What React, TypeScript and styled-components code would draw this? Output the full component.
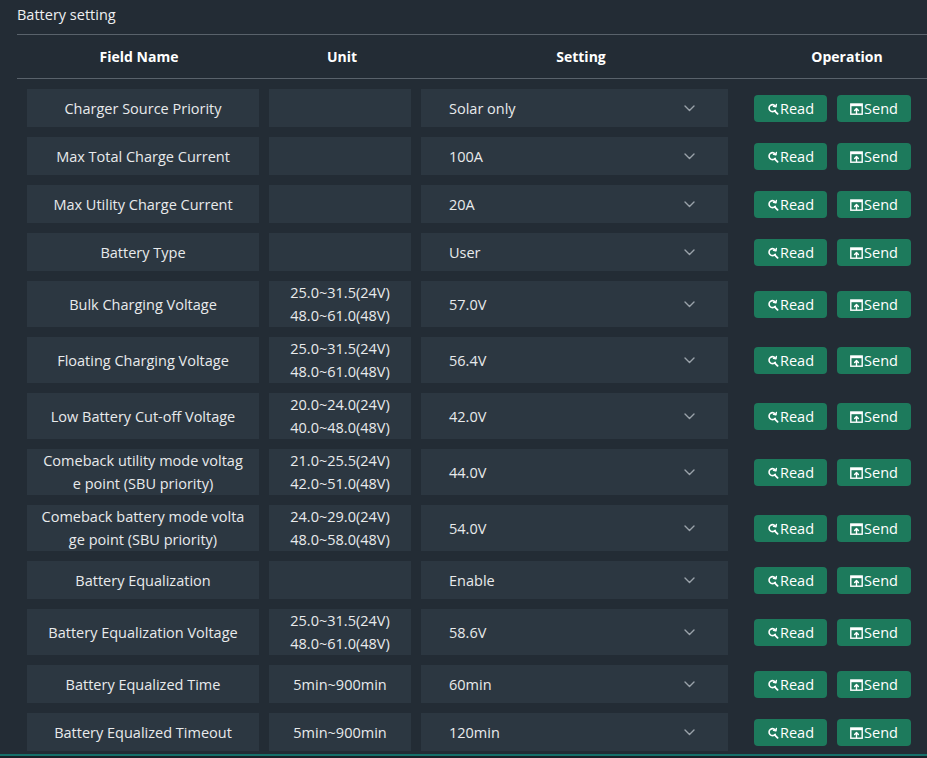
import React from "react";
import styled, { createGlobalStyle } from "styled-components";

const GlobalStyle = createGlobalStyle`
  html, body {
    margin: 0;
    padding: 0;
    background: #1a2128;
  }
  body {
    font-family: "Open Sans", "Liberation Sans", sans-serif;
    color: #e8eaec;
  }
`;

interface Row {
  name: string;
  unit?: string[];
  value: string;
}

const rows: Row[] = [
  { name: "Charger Source Priority", value: "Solar only" },
  { name: "Max Total Charge Current", value: "100A" },
  { name: "Max Utility Charge Current", value: "20A" },
  { name: "Battery Type", value: "User" },
  { name: "Bulk Charging Voltage", unit: ["25.0~31.5(24V)", "48.0~61.0(48V)"], value: "57.0V" },
  { name: "Floating Charging Voltage", unit: ["25.0~31.5(24V)", "48.0~61.0(48V)"], value: "56.4V" },
  { name: "Low Battery Cut-off Voltage", unit: ["20.0~24.0(24V)", "40.0~48.0(48V)"], value: "42.0V" },
  { name: "Comeback utility mode voltage point (SBU priority)", unit: ["21.0~25.5(24V)", "42.0~51.0(48V)"], value: "44.0V" },
  { name: "Comeback battery mode voltage point (SBU priority)", unit: ["24.0~29.0(24V)", "48.0~58.0(48V)"], value: "54.0V" },
  { name: "Battery Equalization", value: "Enable" },
  { name: "Battery Equalization Voltage", unit: ["25.0~31.5(24V)", "48.0~61.0(48V)"], value: "58.6V" },
  { name: "Battery Equalized Time", unit: ["5min~900min"], value: "60min" },
  { name: "Battery Equalized Timeout", unit: ["5min~900min"], value: "120min" },
];

// magnifier with a refresh arrow
const ReadIcon = () => (
  <svg width="12" height="12" viewBox="0 0 12 12" fill="none">
    <path d="M8.6 3.4A3.5 3.5 0 1 0 8.2 7.4" stroke="#fff" strokeWidth="1.6" strokeLinecap="round" />
    <path d="M9.4 1.4 8.9 3.9 6.5 3.3" stroke="#fff" strokeWidth="1.4" strokeLinecap="round" strokeLinejoin="round" />
    <path d="M7.6 7.8 10.6 10.8" stroke="#fff" strokeWidth="1.8" strokeLinecap="round" />
  </svg>
);

const SendIcon = () => (
  <svg width="13" height="12" viewBox="0 0 13 12" fill="none">
    <rect x="0.8" y="1" width="11.4" height="10.2" stroke="#fff" strokeWidth="1.4" />
    <rect x="0.8" y="1" width="11.4" height="2.2" fill="#fff" />
    <path d="M6.5 10.6V5.6M4.6 7.4 6.5 5.5 8.4 7.4" stroke="#fff" strokeWidth="1.4" strokeLinecap="round" strokeLinejoin="round" />
  </svg>
);

const Chevron = () => (
  <svg width="11" height="7" viewBox="0 0 11 7" fill="none">
    <path d="M1 1 5.5 5.5 10 1" stroke="#9aa2aa" strokeWidth="1.4" strokeLinecap="round" strokeLinejoin="round" />
  </svg>
);

const App: React.FC = () => {
  return (
    <Page>
      <GlobalStyle />
      <Title>Battery setting</Title>
      <Table>
        <HeaderRow>
          <HeadCell>Field Name</HeadCell>
          <HeadCell>Unit</HeadCell>
          <HeadCell>Setting</HeadCell>
          <HeadCell>Operation</HeadCell>
        </HeaderRow>
        <Body>
          {rows.map((r) => (
            <DataRow key={r.name}>
              <NameCell>{r.name}</NameCell>
              <UnitCell>
                {r.unit?.map((u) => (
                  <div key={u}>{u}</div>
                ))}
              </UnitCell>
              <SelectCell>
                <span>{r.value}</span>
                <Chevron />
              </SelectCell>
              <Ops>
                <ActionButton $w={73}>
                  <ReadIcon />
                  Read
                </ActionButton>
                <ActionButton $w={74}>
                  <SendIcon />
                  Send
                </ActionButton>
              </Ops>
            </DataRow>
          ))}
        </Body>
      </Table>
    </Page>
  );
};

const Page = styled.div`
  height: 754px;
  background: #232c35;
  border-bottom: 2px solid #16706a;
  overflow: hidden;
  padding-left: 17px;
`;

const Title = styled.div`
  height: 34px;
  line-height: 30px;
  font-size: 14.5px;
  color: #eef0f2;
`;

const Table = styled.div`
  border-top: 1px solid #59626b;
`;

const HeaderRow = styled.div`
  display: grid;
  grid-template-columns: 244px 162px 316px 216px;
  height: 43px;
  align-items: center;
  border-bottom: 1px solid #59626b;
`;

const HeadCell = styled.div`
  text-align: center;
  font-weight: 700;
  font-size: 14px;
  color: #ffffff;
`;

const Body = styled.div`
  display: flex;
  flex-direction: column;
  gap: 10px;
  padding: 10px 0 0 10px;
`;

const DataRow = styled.div`
  display: flex;
  align-items: stretch;
  gap: 10px;
  min-height: 38px;
`;

const Cell = styled.div`
  background: #2c3741;
  font-size: 14.5px;
  line-height: 23px;
  color: #e8eaec;
  display: flex;
  flex-direction: column;
  justify-content: center;
  box-sizing: border-box;
`;

const NameCell = styled(Cell)`
  width: 232px;
  padding-left: 13px;
  padding-right: 13px;
  text-align: center;
  word-break: break-all;
`;

const UnitCell = styled(Cell)`
  width: 142px;
  text-align: center;
`;

const SelectCell = styled(Cell)`
  width: 307px;
  flex-direction: row;
  align-items: center;
  justify-content: space-between;
  padding-left: 28px;
  padding-right: 33px;
`;

const Ops = styled.div`
  display: flex;
  align-items: center;
  gap: 10px;
  margin-left: 16px;
`;

const ActionButton = styled.button<{ $w: number }>`
  width: ${(p) => p.$w}px;
  height: 27px;
  border: none;
  border-radius: 4px;
  background: #1d7a5c;
  color: #ffffff;
  font-family: "Open Sans", "Liberation Sans", sans-serif;
  font-size: 14.5px;
  display: flex;
  align-items: center;
  justify-content: center;
  gap: 1px;
  padding: 1px 0 0;
  cursor: pointer;
`;

export default App;
